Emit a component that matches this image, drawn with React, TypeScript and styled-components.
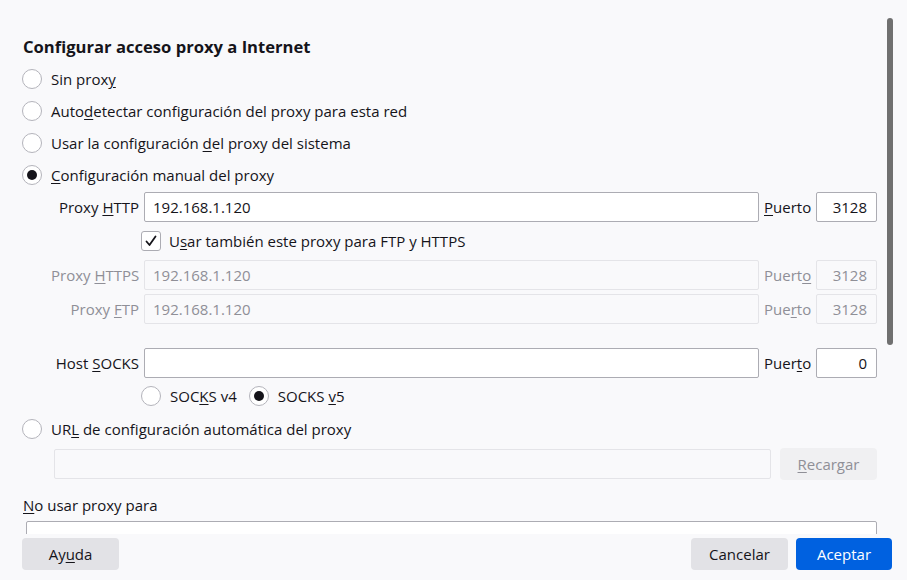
import React from "react";
import styled, { createGlobalStyle } from "styled-components";

const GlobalStyle = createGlobalStyle`
  html, body {
    margin: 0;
    padding: 0;
    background: #f9f9fb;
  }
  body {
    font-family: "Open Sans", "Noto Sans", sans-serif;
    font-size: 15px;
    color: #15141a;
  }
`;

export default function App() {
  return (
    <>
      <GlobalStyle />
      <Dialog>
        <Content>
          <Title>Configurar acceso proxy a Internet</Title>
          <RadioRow>
            <Radio />
            <span>Sin prox<U>y</U></span>
          </RadioRow>
          <RadioRow>
            <Radio />
            <span>Auto<U>d</U>etectar configuración del proxy para esta red</span>
          </RadioRow>
          <RadioRow>
            <Radio />
            <span>Usar la configuración <U>d</U>el proxy del sistema</span>
          </RadioRow>
          <RadioRow>
            <Radio $checked />
            <span><U>C</U>onfiguración manual del proxy</span>
          </RadioRow>

          <FieldRow $top={1}>
            <FieldLabel>Proxy <U>H</U>TTP</FieldLabel>
            <TextInput defaultValue="192.168.1.120" />
            <PortLabel><U>P</U>uerto</PortLabel>
            <PortInput defaultValue="3128" />
          </FieldRow>

          <CheckRow>
            <Checkbox>
              <svg width="14" height="14" viewBox="0 0 14 14">
                <path d="M2.5 7.5 L5.5 11 L11.5 2.5" fill="none" stroke="#15141a" strokeWidth="1.8" strokeLinecap="round" strokeLinejoin="round" />
              </svg>
            </Checkbox>
            <span>U<U>s</U>ar también este proxy para FTP y HTTPS</span>
          </CheckRow>

          <FieldRow $top={0}>
            <FieldLabel $disabled>Proxy <U>H</U>TTPS</FieldLabel>
            <TextInput $disabled readOnly defaultValue="192.168.1.120" />
            <PortLabel $disabled>Puert<U>o</U></PortLabel>
            <PortInput $disabled readOnly defaultValue="3128" />
          </FieldRow>

          <FieldRow $top={4}>
            <FieldLabel $disabled>Proxy <U>F</U>TP</FieldLabel>
            <TextInput $disabled readOnly defaultValue="192.168.1.120" />
            <PortLabel $disabled>Pue<U>r</U>to</PortLabel>
            <PortInput $disabled readOnly defaultValue="3128" />
          </FieldRow>

          <FieldRow $top={24}>
            <FieldLabel>Host <U>S</U>OCKS</FieldLabel>
            <TextInput defaultValue="" />
            <PortLabel>Puer<U>t</U>o</PortLabel>
            <PortInput defaultValue="0" />
          </FieldRow>

          <SocksRow>
            <SocksOption>
              <Radio />
              <span>SOC<U>K</U>S v4</span>
            </SocksOption>
            <SocksOption>
              <Radio $checked />
              <span>SOCKS <U>v</U>5</span>
            </SocksOption>
          </SocksRow>

          <RadioRow>
            <Radio />
            <span>UR<U>L</U> de configuración automática del proxy</span>
          </RadioRow>

          <UrlRow>
            <TextInput $disabled readOnly defaultValue="" />
            <Button $disabled $width={97}><U>R</U>ecargar</Button>
          </UrlRow>

          <SectionLabel><U>N</U>o usar proxy para</SectionLabel>
          <TextArea defaultValue="" />

          <Scrollbar />
        </Content>

        <Footer>
          <Button $width={97}>Ay<U>u</U>da</Button>
          <Spacer />
          <Button $width={97}>Cancelar</Button>
          <Button $width={96} $primary>Aceptar</Button>
        </Footer>
      </Dialog>
    </>
  );
}

const Dialog = styled.div`
  display: flex;
  flex-direction: column;
  width: 907px;
  height: 580px;
  overflow: hidden;
`;

const Content = styled.div`
  position: relative;
  flex: 0 0 534px;
  box-sizing: border-box;
  padding: 35px 30px 0 22px;
  overflow: hidden;
`;

const Title = styled.h1`
  margin: 0 0 4px 1px;
  font-size: 16.6px;
  font-weight: 700;
  line-height: 24px;
`;

const U = styled.span`
  text-decoration: underline;
  text-underline-offset: 2px;
`;

const RadioRow = styled.div`
  display: flex;
  align-items: center;
  gap: 9px;
  height: 32px;
`;

const Radio = styled.span<{ $checked?: boolean }>`
  position: relative;
  flex: 0 0 auto;
  box-sizing: border-box;
  width: 20px;
  height: 20px;
  border-radius: 50%;
  border: 1px solid #b4b4bb;
  background: #fff;

  &::after {
    content: "";
    display: ${(p) => (p.$checked ? "block" : "none")};
    position: absolute;
    left: 4px;
    top: 4px;
    width: 10px;
    height: 10px;
    border-radius: 50%;
    background: #15141a;
  }
`;

const FieldRow = styled.div<{ $top: number }>`
  display: grid;
  grid-template-columns: 88px 1fr 47px 61px;
  column-gap: 5px;
  align-items: center;
  margin: ${(p) => p.$top}px 0 0 29px;
`;

const FieldLabel = styled.label<{ $disabled?: boolean }>`
  text-align: right;
  white-space: nowrap;
  color: ${(p) => (p.$disabled ? "#8f8f97" : "#15141a")};
`;

const PortLabel = styled(FieldLabel)`
  text-align: left;
`;

const TextInput = styled.input<{ $disabled?: boolean }>`
  box-sizing: border-box;
  width: 100%;
  height: 30px;
  padding: 0 8px;
  border: 1px solid ${(p) => (p.$disabled ? "#e4e4e8" : "#acacb3")};
  border-radius: 2px;
  background: ${(p) => (p.$disabled ? "#f9f9fb" : "#fff")};
  font-family: inherit;
  font-size: 15px;
  color: ${(p) => (p.$disabled ? "#8f8f97" : "#15141a")};
  outline: none;
`;

const PortInput = styled(TextInput)`
  text-align: right;
  padding-right: 9px;
`;

const CheckRow = styled.div`
  display: flex;
  align-items: center;
  gap: 8px;
  height: 38px;
  margin-left: 119px;
`;

const Checkbox = styled.span`
  display: flex;
  align-items: center;
  justify-content: center;
  box-sizing: border-box;
  width: 20px;
  height: 20px;
  border: 1px solid #acacb3;
  border-radius: 3px;
  background: #fff;
`;

const SocksRow = styled.div`
  display: flex;
  align-items: center;
  gap: 12px;
  height: 35px;
  margin-left: 119px;
`;

const SocksOption = styled.div`
  display: flex;
  align-items: center;
  gap: 9px;
`;

const UrlRow = styled.div`
  display: flex;
  align-items: center;
  gap: 9px;
  margin: 3px 0 0 32px;
`;

const SectionLabel = styled.div`
  margin: 15px 0 0 1px;
  line-height: 20px;
`;

const TextArea = styled.textarea`
  display: block;
  box-sizing: border-box;
  width: calc(100% - 4px);
  height: 60px;
  margin: 6px 0 0 4px;
  border: 1px solid #acacb3;
  border-radius: 2px;
  background: #fff;
  resize: none;
  outline: none;
`;

const Scrollbar = styled.div`
  position: absolute;
  top: 18px;
  right: 14px;
  width: 6px;
  height: 327px;
  border-radius: 3px;
  background: #707070;
`;

const Footer = styled.div`
  display: flex;
  align-items: flex-start;
  gap: 8px;
  padding: 4px 15px 0 22px;
`;

const Spacer = styled.div`
  flex: 1;
`;

const Button = styled.button<{ $primary?: boolean; $disabled?: boolean; $width: number }>`
  flex: 0 0 auto;
  width: ${(p) => p.$width}px;
  height: 32px;
  border: none;
  border-radius: 4px;
  font-family: inherit;
  font-size: 15px;
  background: ${(p) => (p.$primary ? "#0061e0" : p.$disabled ? "#f0f0f2" : "#e2e2e6")};
  color: ${(p) => (p.$primary ? "#fff" : p.$disabled ? "#8f8f97" : "#15141a")};
`;
